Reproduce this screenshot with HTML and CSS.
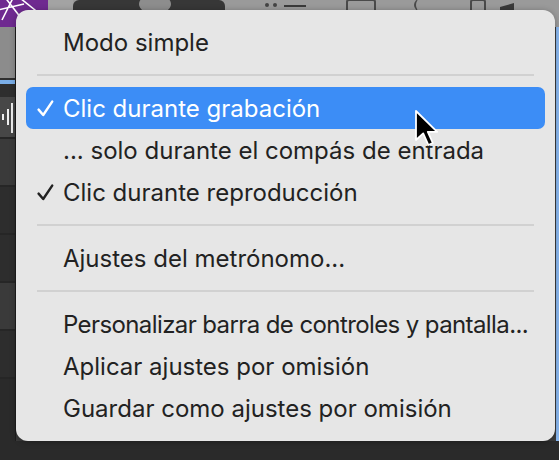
FILE: index.html
```html
<!DOCTYPE html>
<html lang="es">
<head>
    <meta charset="UTF-8">
    <meta name="viewport" content="width=device-width, initial-scale=1.0">
    <title>Menú del metrónomo</title>
    <link rel="stylesheet" href="styles.css">
</head>
<body>
    <div class="app">
        <header class="toolbar">
            <div class="logo">
                <svg width="48" height="27" viewBox="0 0 48 27">
                    <path d="M4 -4 L28 27 M14 -4 L2 20 M20 -2 L40 14 M-2 10 L24 4" stroke="#fff" stroke-width="1.6" fill="none"/>
                </svg>
            </div>
            <div class="tb-grey"></div>
            <div class="transport">
                <div class="knob"></div>
            </div>
            <div class="tools">
                <span class="dot"></span><span class="dot"></span>
                <span class="tool-line"></span>
                <span class="tool-box"></span>
                <span class="tool-bracket"></span>
                <span class="tool-box small"></span>
                <span class="tool-note"></span>
            </div>
        </header>
        <div class="workspace">
            <aside class="tracks">
                <div class="track light"></div>
                <div class="track playhead"></div>
                <div class="track wave">
                    <svg width="14" height="40" viewBox="0 0 14 40">
                        <path d="M3 17 V23 M8 12 V28 M12 6 V36" stroke="#eee" stroke-width="2" fill="none"/>
                    </svg>
                </div>
                <div class="track"></div>
                <div class="track dark"></div>
                <div class="track dark"></div>
                <div class="track"></div>
                <div class="track dark"></div>
            </aside>
            <div class="canvas"></div>
            <div class="edge"></div>
        </div>
        <footer class="statusbar"></footer>
    </div>

    <div class="menu">
        <div class="item"><span class="check"></span>Modo simple</div>
        <div class="sep"></div>
        <div class="item active">
            <span class="check">
                <svg width="17" height="17" viewBox="0 0 17 17"><path d="M1.6 9.6 L6.2 15 L15.2 1.6" stroke="currentColor" stroke-width="2.4" fill="none" stroke-linecap="round" stroke-linejoin="round"/></svg>
            </span>Clic durante grabación
        </div>
        <div class="item"><span class="check"></span>... solo durante el compás de entrada</div>
        <div class="item">
            <span class="check">
                <svg width="17" height="17" viewBox="0 0 17 17"><path d="M1.6 9.6 L6.2 15 L15.2 1.6" stroke="currentColor" stroke-width="2.4" fill="none" stroke-linecap="round" stroke-linejoin="round"/></svg>
            </span>Clic durante reproducción
        </div>
        <div class="sep"></div>
        <div class="item"><span class="check"></span>Ajustes del metrónomo...</div>
        <div class="sep"></div>
        <div class="item tight"><span class="check"></span>Personalizar barra de controles y pantalla...</div>
        <div class="item"><span class="check"></span>Aplicar ajustes por omisión</div>
        <div class="item"><span class="check"></span>Guardar como ajustes por omisión</div>
    </div>

    <svg class="cursor" width="26" height="38" viewBox="0 0 13 19">
        <path d="M1 1 L1 15.5 L4.6 12.2 L7.2 18 L9.4 17 L6.9 11.4 L11.6 11.4 Z" fill="#000" stroke="#fff" stroke-width="0.9" stroke-linejoin="round"/>
    </svg>
</body>
</html>
```

FILE: styles.css
```css
body {
    margin: 0;
    width: 559px;
    height: 460px;
    overflow: hidden;
    background: #2a2a2a;
    font-family: Inter, "Noto Sans", sans-serif;
    position: relative;
}

.app {
    display: grid;
    grid-template-rows: 27px 1fr 19px;
    height: 460px;
}

/* toolbar behind the menu */
.toolbar {
    display: flex;
    background: #9a9a9a;
}

.logo {
    width: 48px;
    background: #6f2a90;
    overflow: hidden;
}

.tb-grey {
    width: 25px;
    background: #a3a3a3;
}

.transport {
    width: 152px;
    background: #373737;
    border-radius: 6px 6px 0 0;
    display: flex;
    justify-content: center;
}

.knob {
    width: 32px;
    height: 20px;
    margin-top: -6px;
    margin-left: 12px;
    border-radius: 50%;
    background: #8d8d8d;
}

.tools {
    flex: 1;
    display: flex;
    align-items: flex-start;
    gap: 4px;
    padding: 3px 0 0 40px;
}

.dot {
    width: 4px;
    height: 4px;
    border-radius: 50%;
    background: #444;
}

.tool-line {
    width: 22px;
    height: 2px;
    margin: 2px 0 0 3px;
    background: #3a3a3a;
}

.tool-box {
    width: 26px;
    height: 12px;
    margin: -4px 0 0 36px;
    border: 2px solid #4a4a4a;
    border-radius: 3px;
}

.tool-box.small {
    width: 12px;
    margin-left: 40px;
}

.tool-bracket {
    width: 10px;
    height: 12px;
    margin: -4px 0 0 34px;
    border-left: 2px solid #4a4a4a;
    border-radius: 6px 0 0 6px;
}

.tool-note {
    width: 14px;
    height: 10px;
    margin: 2px 0 0 10px;
    background: #3a3a3a;
    transform: skewY(-15deg);
}

.workspace {
    display: flex;
}

.tracks {
    width: 15px;
    border-right: 1px solid #1e1e1e;
    display: flex;
    flex-direction: column;
}

.track {
    height: 46px;
    background: #3a3a3a;
    border-bottom: 2px solid #262626;
}

.track.light {
    height: 51px;
    background: #8c8c8c;
    border-bottom: 2px solid #2f2f2f;
}

.track.playhead {
    height: 4px;
    background: #7aaee8;
    border-bottom: 13px solid #2e2e2e;
}

.track.wave {
    height: 40px;
    background: #474747;
}

.track.dark {
    background: #2d2d2d;
}

.canvas {
    flex: 1;
    background: #3b3b3b;
}

.edge {
    width: 3px;
    background: #8ab8f0;
}

.statusbar {
    background: #2a2a2a;
}

/* popup menu */
.menu {
    position: absolute;
    left: 16px;
    top: 10px;
    width: 539px;
    height: 431px;
    box-sizing: border-box;
    padding: 11px 10px;
    background: #e6e6e6;
    border-radius: 12px;
    box-shadow: 0 1px 6px rgba(0, 0, 0, 0.3);
    color: #222;
    font-size: 24px;
}

.item {
    height: 42px;
    display: flex;
    align-items: center;
    padding-left: 11px;
    border-radius: 7px;
    white-space: nowrap;
}

.item.tight {
    letter-spacing: -0.6px;
}

.check {
    width: 26px;
    display: flex;
    align-items: center;
}

.item.active {
    background: #3c8df6;
    color: #fff;
}

.sep {
    height: 24px;
    display: flex;
    align-items: center;
    margin: 0 11px;
}

.sep::before {
    content: "";
    flex: 1;
    height: 2px;
    background: #d1d1d1;
}

.cursor {
    position: absolute;
    left: 414px;
    top: 109px;
}
```
